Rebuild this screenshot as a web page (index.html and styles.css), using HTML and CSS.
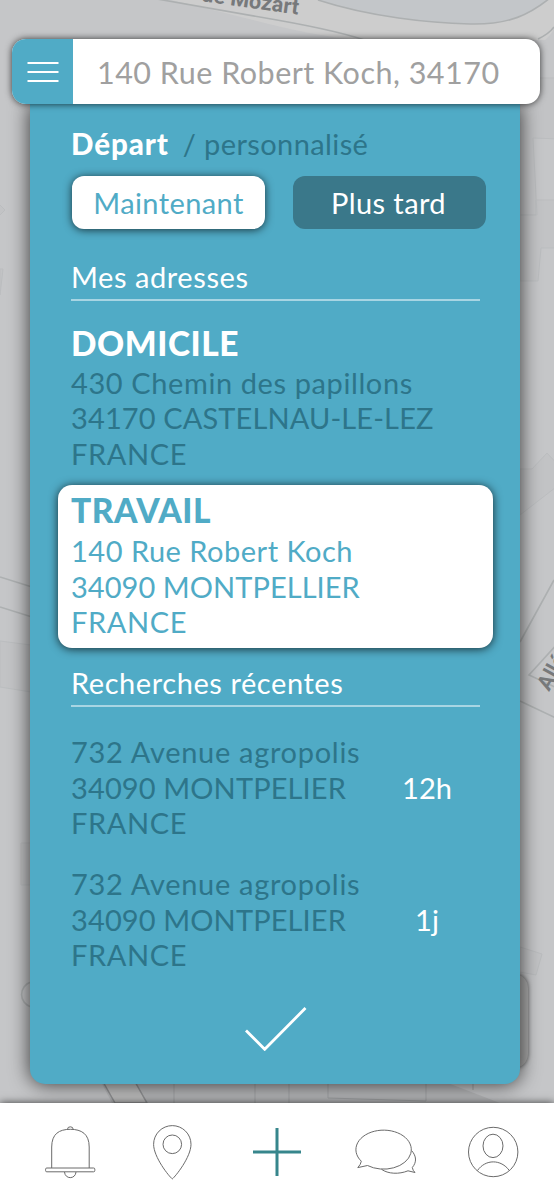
FILE: index.html
```html
<!DOCTYPE html>
<html lang="fr">
<head>
<meta charset="utf-8">
<title>Adresses</title>
<link rel="stylesheet" href="styles.css">
</head>
<body>
<div class="screen">
  <svg class="map" viewBox="0 0 554 1103" width="554" height="1103" aria-hidden="true">
    <rect width="554" height="1103" fill="#c5c6c8"/>
    <path d="M130-8C210 5 290 35 360 40L545 40Q554 32 554 27V-8Z" fill="#cdcdcd"/>
    <path d="M318 0C370 17 430 23 470 24S540 10 550-2Z" fill="#c3c6c9"/>
    <g fill="none" stroke="#adb0b1" stroke-width="1.6">
      <path d="M140-4Q210 8 277 20T370 42M318 0C370 17 430 23 470 24S530 14 550-2M538 39Q549 34 554 27"/>
      <path d="M0 577L32 587M0 607L32 617M554 580L520 642M570 630L529 675L574 696M520 701L560 720"/>
      <path d="M31 982A13 13 0 0 0 31 1007"/>
    </g>
    <g fill="#c2c3c5" stroke="#bbbdbf" stroke-width="1">
      <path d="M520 78H560V139L533 138L537 215H520ZM520 281H538L541 248H560V200H536V215H520ZM520 469H532L547 453L560 467V484L520 515Z"/>
      <path d="M-3 202L5 210L-3 218ZM0 269H3L0 295ZM0 641L31 645V692L0 687ZM21 843H32V885H21ZM520 947L542 954L536 975L520 972Z"/>
    </g>
    <path d="M100 1080H440L500 1103H112Z" fill="#b6b7b9"/>
    <path d="M102 1080L115 1103H147L134 1080Z" fill="#c0c0c0" stroke="#929395" stroke-width="1.5"/>
    <path d="M174 1080V1103M255 1080V1103M289 1080V1103M328 1080V1098L426 1101V1080M473 1080V1090" fill="none" stroke="#a1a3a5"/>
    <text class="map-label" transform="translate(201 1) rotate(8)">ue Mozart</text>
    <text class="map-label" transform="translate(549 692) rotate(-61)">Allée</text>
  </svg>
  <div class="map-control"></div>

  <header class="search">
    <button class="menu" aria-label="Menu">
      <svg width="32" height="22" viewBox="0 0 32 22"><path d="M.5 2H31.5M.5 11H31.5M.5 20H31.5" stroke="#fff" stroke-width="1.8"/></svg>
    </button>
    <div class="query">140 Rue Robert Koch, 34170</div>
  </header>

  <main class="panel">
    <div class="departure"><strong>Départ</strong><span class="custom">/ personnalisé</span></div>
    <div class="choices">
      <button class="choice choice-now">Maintenant</button>
      <button class="choice choice-later">Plus tard</button>
    </div>

    <h2 class="section">Mes adresses</h2>
    <section class="place home">
      <h3>DOMICILE</h3>
      <p class="address"><span class="street">430 Chemin des papillons</span><span class="city">34170 CASTELNAU-LE-LEZ</span><span class="country">FRANCE</span></p>
    </section>
    <section class="place work">
      <h3>TRAVAIL</h3>
      <p class="address"><span class="street">140 Rue Robert Koch</span><span class="city">34090 MONTPELLIER</span><span class="country">FRANCE</span></p>
    </section>

    <h2 class="section recent-title">Recherches récentes</h2>
    <div class="recent">
      <p class="address"><span class="street">732 Avenue agropolis</span><span class="city">34090 MONTPELIER</span><span class="country">FRANCE</span></p>
      <div class="age">12h</div>
    </div>
    <div class="recent">
      <p class="address"><span class="street">732 Avenue agropolis</span><span class="city">34090 MONTPELIER</span><span class="country">FRANCE</span></p>
      <div class="age">1j</div>
    </div>
    <svg class="confirm" width="64" height="46" viewBox="0 0 64 46"><path d="M3 25.5L21.7 44.3L62.5 3" fill="none" stroke="#fff" stroke-width="2.8"/></svg>
  </main>

  <nav class="tabs">
    <svg class="bell" width="52" height="56" viewBox="44 1124 52 56">
      <path d="M51.7 1168V1147C51.7 1134 59 1129.3 70.3 1129.3S89.2 1134 89.2 1147V1168M67.5 1129.3Q67.5 1126.8 70.3 1126.8T73.2 1129.3M64.5 1172C65 1179.5 75.5 1179.5 76 1172"/>
      <rect x="45.6" y="1168" width="49.2" height="3.8" rx="1.2"/>
    </svg>
    <svg class="pin" width="40" height="56" viewBox="152 1124 40 56">
      <path d="M172.3 1178.9C169 1176.5 153.6 1157 153.6 1144.3A18.7 18.7 0 0 1 191 1144.3C191 1157 175.5 1176.5 172.3 1178.9Z"/>
      <circle cx="172.3" cy="1144.3" r="9.3"/>
    </svg>
    <svg class="add" width="48" height="48" viewBox="0 0 48 48"><path d="M0 24H48M24 0V48"/></svg>
    <svg class="chat" width="62" height="48" viewBox="355 1128 62 48">
      <path d="M361.3 1161.2A27.7 19.5 0 1 1 367.5 1165.5L357.8 1167.6Q360.8 1164.5 361.3 1161.2Z"/>
      <path d="M411.8 1150.8C416.3 1156 417 1162 412.3 1167.5Q412.8 1170.6 415 1172.5L408 1170.8C399 1174.5 388 1174 381.5 1169.3"/>
    </svg>
    <svg class="profile" width="52" height="52" viewBox="467 1126.3 52 52">
      <circle cx="493.2" cy="1152.3" r="24.7"/>
      <ellipse cx="493" cy="1146.2" rx="10" ry="11.7"/>
      <path d="M477.5 1170.8C485.5 1159.3 501 1159.3 509.3 1170.8"/>
    </svg>
  </nav>
</div>
</body>
</html>
```

FILE: styles.css
```css
* { box-sizing: border-box; }
body { margin: 0; font-family: Lato, "Open Sans", sans-serif; font-size: 29px; }
button { border: 0; padding: 0; font: inherit; }
h2, h3, p { margin: 0; }
.screen { position: relative; width: 554px; height: 1200px; overflow: hidden; display: flex; flex-direction: column; }
.map { position: absolute; left: 0; top: 0; }
.map-label { font: 700 21.5px Roboto, sans-serif; fill: #77797b; }
.map-control { position: absolute; left: 480px; top: 974px; width: 48px; height: 94px; border-radius: 14px; background: #aaa; box-shadow: 0 0 4px #555; }

.search { position: relative; z-index: 2; flex: none; display: flex; width: 528px; height: 65px; margin: 39px 0 0 12px; border-radius: 14px; overflow: hidden; background: #fff; box-shadow: 0 0 7px rgba(0, 0, 0, .75); }
.menu { width: 61px; background: #50abc6; display: flex; align-items: center; justify-content: center; }
.query { flex: 1; padding-left: 24px; line-height: 67px; font-size: 30.5px; letter-spacing: .49px; color: #a0a0a0; white-space: nowrap; }

.panel { position: relative; flex: none; width: 490px; height: 980px; margin-left: 30px; padding: 22px 0 0 41px; background: #50abc6; border-radius: 0 0 15px 15px; color: #fff; box-shadow: 0 0 20px rgba(0, 0, 0, .75); display: flex; flex-direction: column; }
.departure { height: 36px; line-height: 36px; display: flex; gap: 14px; }
.departure strong { font-weight: 900; font-size: 29.5px; letter-spacing: .9px; }
.custom, .address { color: #2d758a; }
.custom { letter-spacing: .4px; }
.choices { display: flex; gap: 28px; margin: 14px 0 0 1px; }
.choice { width: 193px; height: 53px; border-radius: 12px; line-height: 52px; letter-spacing: .4px; }
.choice-now { background: #fff; color: #50abc6; box-shadow: 0 1px 8px rgba(0, 0, 0, .7); }
.choice-later { background: #3a788a; color: #fff; padding-right: 2px; }

.section { font-weight: 400; font-size: inherit; line-height: 36px; letter-spacing: .57px; margin-top: 30px; width: 409px; border-bottom: 2px solid rgba(255, 255, 255, .5); padding-bottom: 4px; }
h3 { font-size: 33.5px; font-weight: 900; line-height: 40px; letter-spacing: .55px; }
.address { line-height: 35.4px; }
.address span { display: block; white-space: nowrap; }
.street, .country { letter-spacing: .6px; }
.city { letter-spacing: .12px; }
.home { margin-top: 22px; }
.home .address { margin-top: 2px; }
.work { flex: none; margin: 14px 0 0 -13px; padding: 5px 13px; width: 435px; height: 163px; background: #fff; border-radius: 14px; color: #50abc6; box-shadow: 0 1px 10px rgba(0, 0, 0, .75); }
.work .address { margin-top: 3px; color: inherit; }
.work .street { letter-spacing: .5px; }
.work .city { letter-spacing: .05px; }
.recent-title { margin-top: 17px; }
.recent { display: flex; align-items: center; height: 106px; margin-top: 27px; }
.recent + .recent { margin-top: 26px; }
.recent .address { width: 306px; }
.recent .street { letter-spacing: .7px; }
.age { width: 100px; text-align: center; line-height: 36px; padding-top: 1px; }
.confirm { margin: 33px 0 0 172px; }

.tabs { position: relative; z-index: 1; flex: none; margin-top: 19px; height: 97px; padding-left: 44px; background: #fff; box-shadow: 0 0 8px rgba(0, 0, 0, .7); display: flex; align-items: center; }
.tabs svg { flex: none; fill: none; stroke: #6b6b6b; stroke-width: 1; }
.tabs .pin { margin-left: 56px; }
.tabs .add { margin-left: 61px; stroke: #37868c; stroke-width: 3; }
.tabs .chat { margin-left: 54px; }
.tabs .profile { margin-left: 50px; }
```
